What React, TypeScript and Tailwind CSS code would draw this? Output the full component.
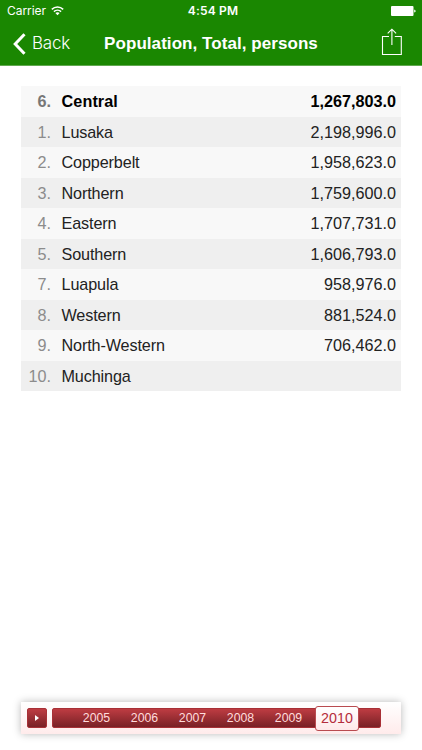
import clsx from 'clsx'

type Region = { rank: number; name: string; value?: string; selected?: boolean }

const REGIONS: Region[] = [
  { rank: 6, name: 'Central', value: '1,267,803.0', selected: true },
  { rank: 1, name: 'Lusaka', value: '2,198,996.0' },
  { rank: 2, name: 'Copperbelt', value: '1,958,623.0' },
  { rank: 3, name: 'Northern', value: '1,759,600.0' },
  { rank: 4, name: 'Eastern', value: '1,707,731.0' },
  { rank: 5, name: 'Southern', value: '1,606,793.0' },
  { rank: 7, name: 'Luapula', value: '958,976.0' },
  { rank: 8, name: 'Western', value: '881,524.0' },
  { rank: 9, name: 'North-Western', value: '706,462.0' },
  { rank: 10, name: 'Muchinga' },
]

const YEARS = [2005, 2006, 2007, 2008, 2009]

function StatusBar() {
  return (
    <div className="grid h-[22px] grid-cols-3 items-center pr-[6px] pl-[7px] text-white">
      <div className="flex items-center gap-[5px]">
        <span className="font-[Inter,sans-serif] text-[12px] leading-none tracking-[-0.05px]">Carrier</span>
        <svg width="13" height="10" viewBox="0 0 13 10" fill="none" stroke="currentColor" strokeWidth="1.5">
          <path d="M.8 3.4C4 .3 9 .3 12.200 3.400" />
          <path d="M2.900 5.600C4.900 3.700 8.100 3.700 10.100 5.600" />
          <path d="M4.400 7C5.600 5.900 7.400 5.900 8.600 7L6.500 9.200Z" fill="currentColor" stroke="none" />
        </svg>
      </div>
      <span className="pl-[3px] text-center font-[Inter,sans-serif] text-[12px] leading-none font-semibold tracking-[0.15px]">
        4:54 PM
      </span>
      <svg className="justify-self-end" width="25" height="10" viewBox="0 0 25 10" fill="currentColor">
        <rect width="22.500" height="10" rx="1" />
        <path d="M23.200 3.500Q24.700 4 24.700 5T23.200 6.500Z" />
      </svg>
    </div>
  )
}

function NavBar() {
  return (
    <div className="grid h-[43px] grid-cols-[92px_1fr_92px] items-center text-white">
      <button type="button" className="flex items-center gap-[6px] pl-[13px]">
        <svg width="13" height="22" viewBox="0 0 13 22" fill="none" stroke="currentColor" strokeWidth="3">
          <path d="M11.500 1.300L2.200 11L11.500 20.700" />
        </svg>
        <span className="font-[Inter,sans-serif] text-[17px] leading-none font-light tracking-[-0.25px]">Back</span>
      </button>
      <h1 className="text-center text-[17px] leading-none font-bold tracking-[0.06px] whitespace-nowrap">
        Population, Total, persons
      </h1>
      <button type="button" className="mr-[19px] mb-[4px] justify-self-end" aria-label="Share">
        <svg width="22" height="28" viewBox="0 0 22 28" fill="none" stroke="currentColor" strokeWidth="1.100">
          <path d="M8 8.500H1.500V26.500H20.300V8.500H13.800M10.900 17V1.200M6.700 5.400L10.900 1.200L15.100 5.400" />
        </svg>
      </button>
    </div>
  )
}

function RegionRow({ region }: { region: Region }) {
  return (
    <li
      className={clsx(
        'flex h-[30.5px] items-center pr-[5px] text-[16.2px] leading-none odd:bg-[#f8f8f8] even:bg-[#efefef]',
        region.selected ? 'font-bold text-black' : 'text-[#222]',
      )}
    >
      <span className={clsx('w-[30px] text-right', region.selected ? 'text-[#777]' : 'text-[#8c8c8c]')}>
        {region.rank}.
      </span>
      <span className={clsx('flex-1 pl-[10.5px]', region.selected ? 'tracking-[0.1px]' : 'tracking-[-0.12px]')}>
        {region.name}
      </span>
      <span>{region.value}</span>
    </li>
  )
}

function YearSlider() {
  return (
    <div className="mx-[21px] mb-[16px] flex h-[32px] items-center gap-[5px] bg-linear-to-b from-white to-[#ffebeb] pl-[6px] shadow-[0_0_8px_rgba(0,0,0,0.28)]">
      <button
        type="button"
        aria-label="Play"
        className="flex size-[20px] items-center justify-center rounded-[2px] border border-[#a83036] bg-linear-to-b from-[#be3c42] to-[#792126]"
      >
        <svg width="4" height="6" viewBox="0 0 4 6" fill="white">
          <path d="M0 0L4 3L0 6Z" />
        </svg>
      </button>
      <div className="relative flex h-[20px] w-[329px] items-center rounded-[2px] border border-[#a83036] bg-linear-to-b from-[#be3c42] to-[#792126] pl-[19.5px]">
        {YEARS.map((year) => (
          <span key={year} className="w-[48px] text-center text-[12.3px] leading-none text-[#ffdcdc]">
            {year}
          </span>
        ))}
        <span className="absolute top-[-3px] left-[262px] flex h-[25px] w-[44px] items-center justify-center rounded-[3px] border border-[#b94b50] bg-linear-to-b from-white to-[#ffe9e9] text-[14.3px] leading-none text-[#b52d3c]">
          2010
        </span>
      </div>
    </div>
  )
}

export default function App() {
  return (
    <div className="flex h-[750px] w-[422px] flex-col overflow-hidden bg-white font-['Liberation_Sans',Arial,sans-serif]">
      <header className="h-[66px] border-b border-[#60a84f] bg-[#1a8701]">
        <StatusBar />
        <NavBar />
      </header>
      <main className="flex-1 px-[21px] pt-[20px]">
        <ul>
          {REGIONS.map((region) => (
            <RegionRow key={region.rank} region={region} />
          ))}
        </ul>
      </main>
      <YearSlider />
    </div>
  )
}
